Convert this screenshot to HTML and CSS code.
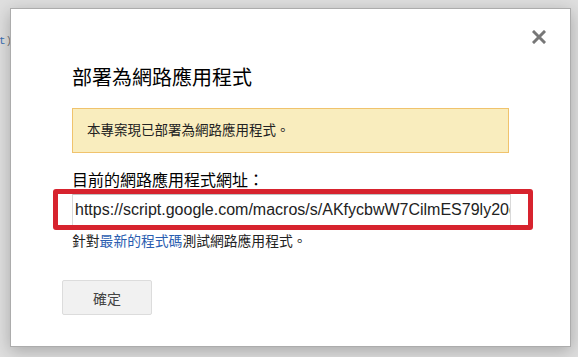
FILE: index.html
```html
<!DOCTYPE html>
<html lang="zh-Hant">
<head>
  <meta charset="UTF-8">
  <title>部署為網路應用程式</title>
  <link rel="stylesheet" href="styles.css">
</head>
<body>
  <div class="editor-behind"><span class="kw">t</span>)</div>

  <div class="dialog">
    <button class="close-btn" aria-label="關閉">
      <svg width="14" height="14" viewBox="0 0 14 14">
        <path d="M2 2 L12 12 M12 2 L2 12" stroke="#777" stroke-width="3" stroke-linecap="square" fill="none"/>
      </svg>
    </button>

    <h2 class="dialog-title">部署為網路應用程式</h2>

    <div class="notice">本專案現已部署為網路應用程式。</div>

    <label class="url-label" for="appUrl">目前的網路應用程式網址：</label>
    <div class="url-wrap">
      <input type="text" id="appUrl" class="url-field" value="https://script.google.com/macros/s/AKfycbwW7CilmES79ly20dTkQZ1xw/exec" readonly>
      <div class="highlight"></div>
    </div>
    <div class="hint">針對<a href="#">最新的程式碼</a>測試網路應用程式。</div>

    <button class="ok-btn">確定</button>
  </div>
</body>
</html>
```

FILE: styles.css
```css
body {
  margin: 0;
  padding: 0;
  height: 357px;
  background: #dfdfdf;
  font-family: 'Liberation Sans', 'Noto Sans CJK TC', sans-serif;
  overflow: hidden;
  position: relative;
}

.editor-behind {
  padding: 34px 0 0 0;
  margin-left: -1px;
  font-family: 'Liberation Mono', monospace;
  font-size: 11px;
  line-height: 14px;
  color: #777;
}

.editor-behind .kw {
  color: #3b6fb3;
}

.dialog {
  position: absolute;
  left: 10px;
  top: 8px;
  width: 561px;
  height: 339px;
  box-sizing: border-box;
  background: #fff;
  border: 1px solid #acacac;
  box-shadow: 0 4px 16px rgba(0, 0, 0, 0.25);
  padding: 57px 61px 0 61px;
}

.close-btn {
  position: absolute;
  top: 21px;
  right: 24px;
  width: 14px;
  height: 14px;
  padding: 0;
  border: none;
  background: none;
  cursor: pointer;
  display: flex;
}

.dialog-title {
  margin: 0;
  font-size: 20px;
  line-height: 24px;
  font-weight: normal;
  color: #000;
}

.notice {
  margin-top: 18px;
  padding: 13px 14px;
  background: #f9edbe;
  border: 1px solid #f0c36d;
  font-size: 13.5px;
  line-height: 17px;
  color: #222;
}

.url-label {
  display: block;
  margin-top: 18px;
  font-size: 16px;
  line-height: 20px;
  color: #000;
}

.url-wrap {
  position: relative;
  margin-top: 3px;
}

.url-field {
  display: block;
  width: 439px;
  height: 32px;
  box-sizing: border-box;
  margin: 0;
  padding: 0 0 0 2px;
  border: 1px solid #d9d9d9;
  border-top-color: #c0c0c0;
  font-family: 'Liberation Sans', sans-serif;
  font-size: 16px;
  color: #222;
  outline: none;
}

.highlight {
  position: absolute;
  left: -19px;
  right: -24px;
  top: -5px;
  bottom: -4px;
  border: 5px solid #d7232e;
  border-radius: 3px;
  pointer-events: none;
}

.hint {
  margin-top: 8px;
  font-size: 13.8px;
  line-height: 16px;
  color: #222;
}

.hint a {
  color: #2a5db0;
  text-decoration: none;
}

.ok-btn {
  display: block;
  margin: 30px 0 0 -10px;
  width: 90px;
  height: 35px;
  background: #f1f1f1;
  border: 1px solid #dcdcdc;
  border-radius: 2px;
  font-family: 'Liberation Sans', 'Noto Sans CJK TC', sans-serif;
  font-size: 14px;
  color: #444;
  cursor: pointer;
}
```
